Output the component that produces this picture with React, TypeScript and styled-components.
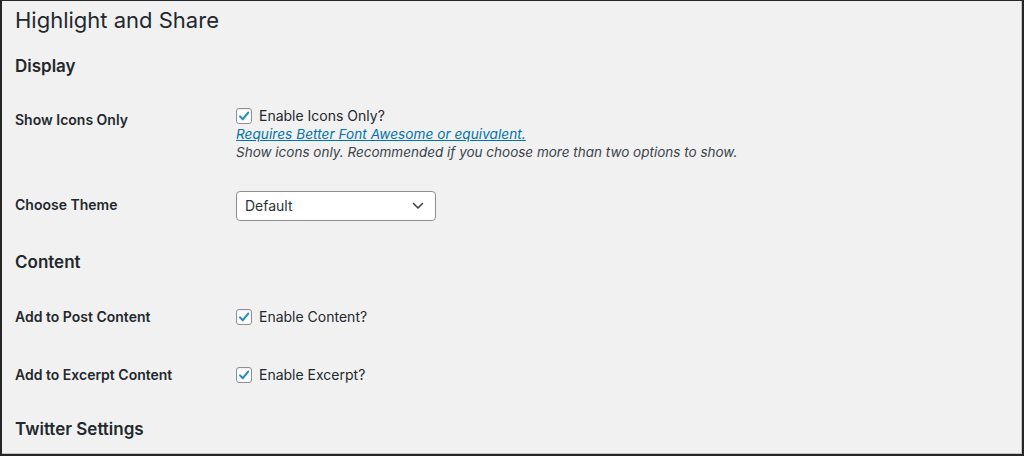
import React from 'react';
import styled, { createGlobalStyle } from 'styled-components';

const GlobalStyle = createGlobalStyle`
  html, body {
    margin: 0;
    padding: 0;
    background: #f1f1f1;
  }
  body {
    font-family: Inter, "Noto Sans", "Liberation Sans", sans-serif;
    color: #23282d;
  }
`;

const Frame = styled.div`
  box-sizing: border-box;
  width: 1024px;
  height: 456px;
  overflow: hidden;
  background: #f1f1f1;
  border-style: solid;
  border-color: #262626;
  border-width: 1px 2px 2px 2px;
  box-shadow: inset -1px -1px 0 #c4c4c4;
  padding: 0 0 0 13px;
`;

const Title = styled.h1`
  margin: 0;
  padding: 5px 0 5px;
  font-size: 22px;
  line-height: 29px;
  font-weight: 400;
  color: #23282d;
`;

const SectionTitle = styled.h2<{ $top?: number }>`
  margin: ${(p) => p.$top ?? 15}px 0 15px;
  font-size: 17px;
  line-height: 22px;
  font-weight: 600;
  color: #23282d;
`;

const Row = styled.div`
  display: grid;
  grid-template-columns: 221px 1fr;
`;

const Label = styled.div<{ $pad: number }>`
  padding-top: ${(p) => p.$pad}px;
  font-size: 14px;
  line-height: 18px;
  font-weight: 600;
`;

const Field = styled.div<{ $pad: number }>`
  padding: ${(p) => p.$pad}px 0;
  font-size: 14px;
  line-height: 18px;
`;

const CheckLine = styled.label`
  display: flex;
  align-items: center;
  gap: 7px;
  height: 18px;
`;

const Box = styled.span`
  box-sizing: border-box;
  width: 16px;
  height: 16px;
  border: 1px solid #8c8f94;
  border-radius: 3px;
  background: #fff;
  display: flex;
  align-items: center;
  justify-content: center;
  box-shadow: inset 0 1px 2px rgba(0, 0, 0, 0.08);
`;

const HelpLink = styled.a`
  display: block;
  font-style: italic;
  color: #0073aa;
  text-decoration: underline;
  font-size: 13.6px;
  letter-spacing: 0.05px;
`;

const Description = styled.p`
  margin: 0;
  font-style: italic;
  font-size: 13.5px;
  color: #3c434a;
`;

const Select = styled.div`
  box-sizing: border-box;
  width: 200px;
  height: 30px;
  background: #fff;
  border: 1px solid #8c8f94;
  border-radius: 4px;
  display: flex;
  align-items: center;
  justify-content: space-between;
  padding: 0 11px 0 8px;
  font-size: 14px;
  color: #2c3338;
`;

const Checkbox: React.FC<{ label: string }> = ({ label }) => (
  <CheckLine>
    <Box>
      <svg width="12" height="12" viewBox="0 0 12 12">
        <path d="M2 6.4 L4.8 9.2 L10.2 2.6" fill="none" stroke="#1e8cbe" strokeWidth="2" strokeLinecap="round" strokeLinejoin="round" />
      </svg>
    </Box>
    {label}
  </CheckLine>
);

const App: React.FC = () => (
  <>
    <GlobalStyle />
    <Frame>
      <Title>Highlight and Share</Title>
      <SectionTitle>Display</SectionTitle>
      <Row>
        <Label $pad={19}>Show Icons Only</Label>
        <Field $pad={15}>
          <Checkbox label="Enable Icons Only?" />
          <HelpLink href="#">Requires Better Font Awesome or equivalent.</HelpLink>
          <Description>Show icons only. Recommended if you choose more than two options to show.</Description>
        </Field>
      </Row>
      <Row>
        <Label $pad={20}>Choose Theme</Label>
        <Field $pad={15}>
          <Select>
            <span>Default</span>
            <svg width="12" height="8" viewBox="0 0 12 8">
              <path d="M1.5 1.5 L6 6 L10.5 1.5" fill="none" stroke="#3c434a" strokeWidth="1.6" strokeLinecap="round" strokeLinejoin="round" />
            </svg>
          </Select>
        </Field>
      </Row>
      <SectionTitle>Content</SectionTitle>
      <Row>
        <Label $pad={20}>Add to Post Content</Label>
        <Field $pad={20}>
          <Checkbox label="Enable Content?" />
        </Field>
      </Row>
      <Row>
        <Label $pad={20}>Add to Excerpt Content</Label>
        <Field $pad={20}>
          <Checkbox label="Enable Excerpt?" />
        </Field>
      </Row>
      <SectionTitle $top={14}>Twitter Settings</SectionTitle>
    </Frame>
  </>
);

export default App;
